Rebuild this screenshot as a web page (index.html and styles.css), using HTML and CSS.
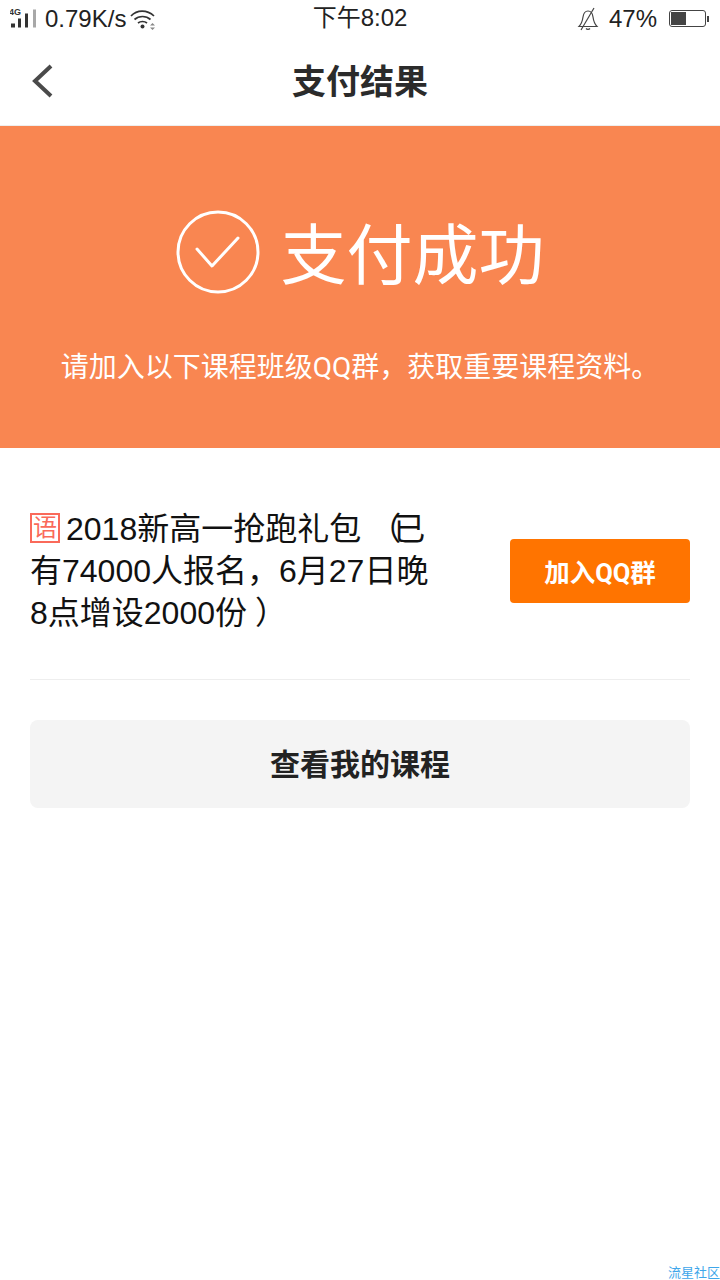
FILE: index.html
```html
<!DOCTYPE html>
<html lang="zh-CN">
<head>
<meta charset="utf-8">
<title>支付结果</title>
<link rel="stylesheet" href="styles.css">
</head>
<body>
<div class="status">
  <div class="status-left">
    <svg class="signal" width="30" height="22" viewBox="0 0 30 22">
      <text x="-1" y="7" class="net">4G</text>
      <rect x="1" y="15.500" width="4" height="4" fill="#333"/>
      <rect x="8" y="10.500" width="3" height="9" fill="#333"/>
      <rect x="15" y="5.500" width="3" height="14" fill="#333"/>
      <rect x="23" y="1.500" width="3" height="18" fill="#a8a8a8"/>
    </svg>
    <span class="speed">0.79K/s</span>
    <svg class="wifi" width="26" height="22" viewBox="0 0 26 22" fill="none" stroke="#333" stroke-width="1.700">
      <path d="M1 8C7 1.500 17 1.500 24 8"/>
      <path d="M4.500 11.500C9 7.500 16 7.500 20.500 11.500"/>
      <path d="M8 15C10.500 13 14.500 13 17 15"/>
      <circle cx="12.500" cy="18.500" r="2" fill="#333" stroke="none"/>
      <path d="M20 17.500h5l-2.500-2.500zM20 19.500h5l-2.500 2.500z" fill="#888" stroke="none"/>
    </svg>
  </div>
  <div class="clock">下午8:02</div>
  <div class="status-right">
    <svg width="22" height="24" viewBox="0 0 22 24" fill="none" stroke="#444" stroke-width="1.200">
      <path d="M2 19.500c3-3 3.500-6 4-9.500 .6-4 3-6 5-6 2.500 0 4.500 2 5 6 .5 3.500 1.500 7 4 9.500z"/>
      <path d="M9 21.500c1 1.200 3 1.200 4 0"/>
      <path d="M17 1L4 23"/>
    </svg>
    <span class="percent">47%</span>
    <div class="battery"><div class="battery-level"></div></div>
    <div class="battery-tip"></div>
  </div>
</div>

<header class="nav">
  <svg class="back" width="24" height="36" viewBox="0 0 24 36" fill="none" stroke="#4a4a4a" stroke-width="4">
    <path d="M22 3L6 18l16 15"/>
  </svg>
  <h1 class="nav-title">支付结果</h1>
</header>

<section class="banner">
  <div class="banner-head">
    <svg width="84" height="84" viewBox="0 0 84 84" fill="none" stroke="#fff">
      <circle cx="42" cy="42" r="40" stroke-width="3"/>
      <path d="M21 39L36 56 62 28" stroke-width="3" stroke-linecap="round" stroke-linejoin="round"/>
    </svg>
    <span class="banner-title">支付成功</span>
  </div>
  <p class="banner-note">请加入以下课程班级QQ群，获取重要课程资料。</p>
</section>

<main class="content">
  <div class="course">
    <p class="course-name"><span class="tag">语</span>2018新高一抢跑礼包<span class="paren">（</span>已有74000人报名，6月27日晚8点增设2000份<span class="paren">）</span></p>
    <button class="join">加入QQ群</button>
  </div>
  <button class="my-courses">查看我的课程</button>
</main>

<div class="mark">流星社区</div>
</body>
</html>
```

FILE: styles.css
```css
* { box-sizing: border-box; }

html, body {
  margin: 0;
  height: 1280px;
  overflow: hidden;
  background: #fff;
  font-family: "Liberation Sans", "Noto Sans CJK SC", sans-serif;
  color: #222;
}

.status {
  height: 37px;
  display: grid;
  grid-template-columns: 1fr auto 1fr;
  align-items: center;
  padding: 0 10px;
  font-size: 24px;
  line-height: 30px;
  color: #222;
}

.status-left, .status-right {
  display: flex;
  align-items: center;
}

.status-right { justify-content: flex-end; }

.signal { margin-right: 5px; }
.net { font-size: 9px; font-weight: 700; fill: #333; font-family: "Liberation Sans", sans-serif; }
.wifi { margin-left: 4px; }
.clock { padding-bottom: 2px; }
.percent { margin: 0 12px 0 10px; }

.battery {
  width: 37px;
  height: 17px;
  border: 1px solid #444;
  border-radius: 3px;
  padding: 1px;
}
.battery-level { width: 15px; height: 100%; background: #444; }
.battery-tip { width: 2px; height: 6px; background: #444; margin: 0 1px 0 1px; }

.nav {
  height: 89px;
  display: flex;
  align-items: center;
  justify-content: center;
  position: relative;
  border-bottom: 1px solid #eee;
}

.back { position: absolute; left: 29px; top: 26px; }

.nav-title {
  margin: 0 0 3px;
  font-size: 34px;
  font-weight: 700;
  color: #2b2b2b;
}

.banner {
  height: 322px;
  background: #f98651;
  color: #fff;
  padding-top: 84px;
  text-align: center;
}

.banner-head {
  display: flex;
  align-items: flex-start;
  justify-content: center;
  gap: 21px;
}

.banner-title { margin-top: 4px; font-size: 66px; line-height: 84px; font-weight: 400; }

.banner-note {
  margin: 50px 0 0;
  font-family: Roboto, "Noto Sans CJK SC", sans-serif;
  font-size: 28px;
  line-height: 40px;
}

.content { padding: 0 30px; }

.course {
  height: 232px;
  padding-top: 14px;
  display: flex;
  align-items: center;
  justify-content: space-between;
  border-bottom: 1px solid #eee;
}

.course-name {
  width: 402px;
  margin: 0;
  font-size: 32px;
  line-height: 42px;
  color: #111;
}

/* Full-width brackets sit mid-cell here instead of hugging the text */
.paren { margin: 0 -8px 0 8px; }

.tag {
  display: inline-block;
  width: 30px;
  height: 30px;
  margin-right: 6px;
  border: 2px solid #fa6a5a;
  color: #fa6a5a;
  font-size: 24px;
  line-height: 26px;
  text-align: center;
  vertical-align: 4px;
}

.join {
  width: 180px;
  height: 64px;
  border: 0;
  border-radius: 4px;
  background: #ff7400;
  color: #fff;
  font: 700 25.500px Roboto, "Noto Sans CJK SC", sans-serif;
}

.my-courses {
  display: block;
  width: 100%;
  height: 88px;
  margin-top: 40px;
  padding-bottom: 5px;
  border: 0;
  border-radius: 8px;
  background: #f4f4f4;
  color: #222;
  font: 700 30px "Liberation Sans", "Noto Sans CJK SC", sans-serif;
}

.mark {
  position: absolute;
  right: 0;
  bottom: 0;
  font-size: 13px;
  line-height: 14px;
  color: #3ea6ea;
}
```
